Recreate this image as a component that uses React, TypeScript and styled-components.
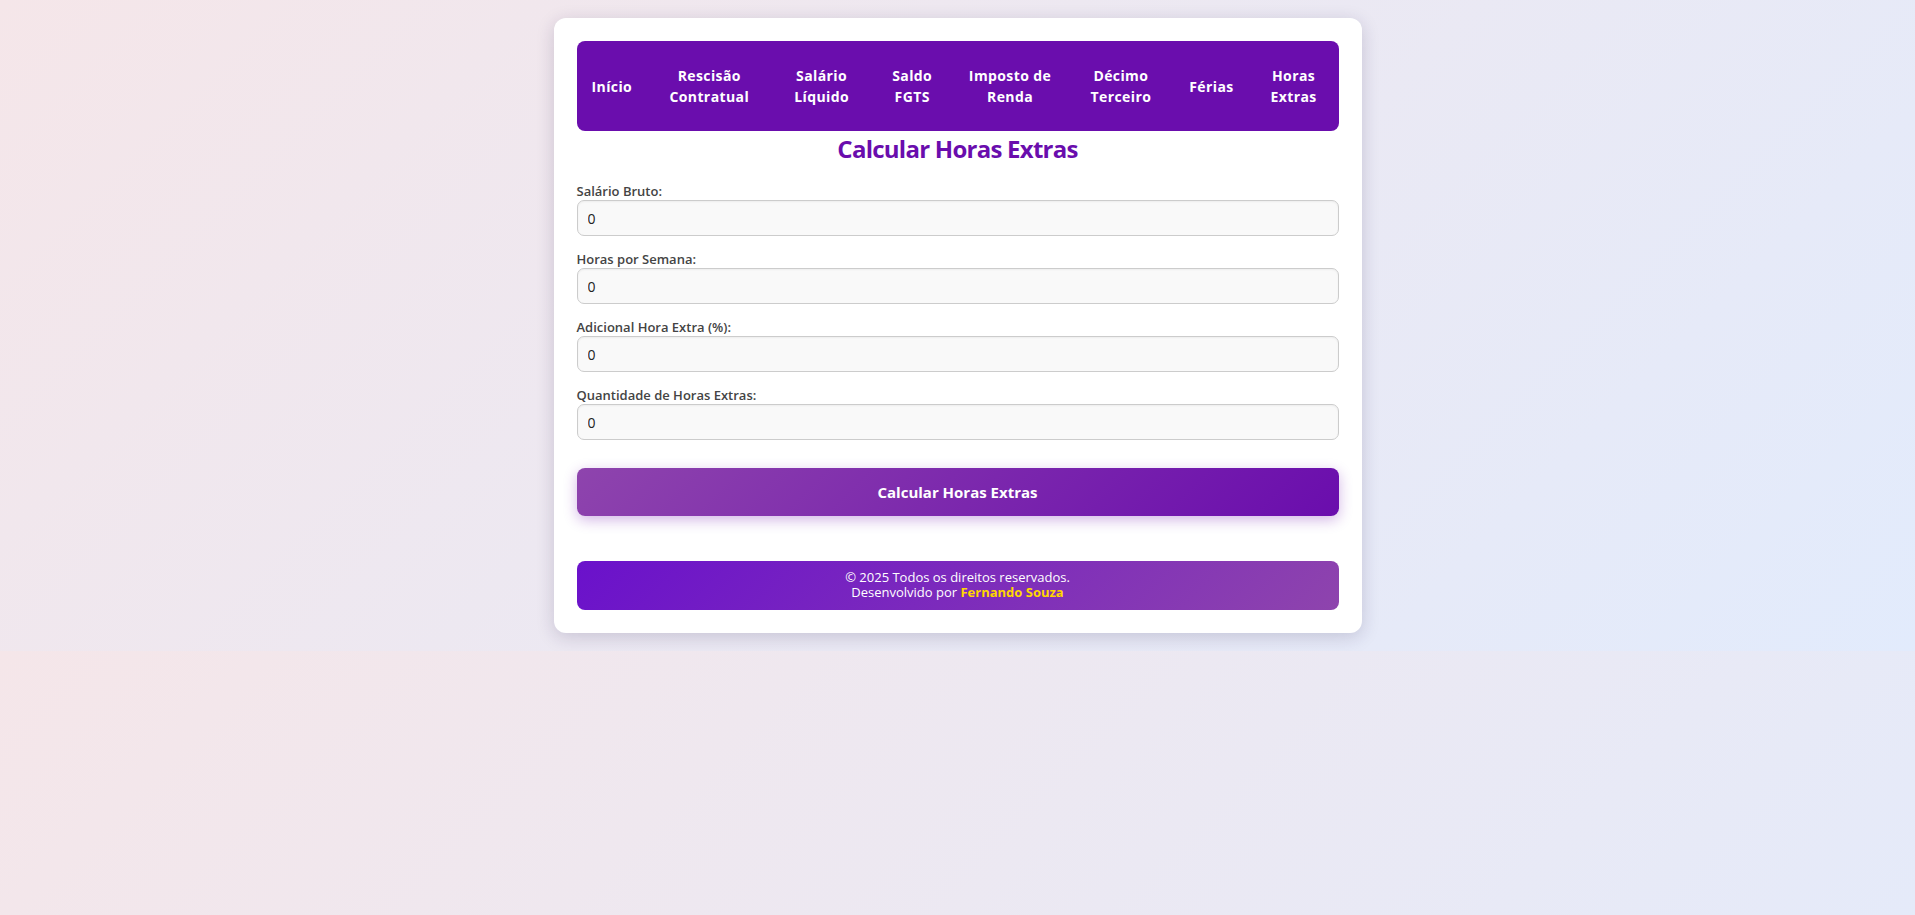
import React from 'react';
import styled, { createGlobalStyle } from 'styled-components';

const Colors = {
  Purple: '#6a0dad',
  PurpleSoft: '#8e44ad',
  PurpleBlue: '#6a11cb',
  Gold: '#ffd700',
  Label: '#444444',
};

const GlobalStyle = createGlobalStyle`
  body {
    margin: 0;
    padding: 18px 0;
    font-family: 'Open Sans', 'DejaVu Sans', sans-serif;
    background: linear-gradient(135deg, #f5e6e9 0%, #e2ebfc 100%);
  }
`;

const Card = styled.div`
  box-sizing: border-box;
  width: 808px;
  margin: 0 auto;
  padding: 23px;
  background: #ffffff;
  border-radius: 12px;
  box-shadow: 0 4px 18px rgba(40, 30, 80, 0.18);
`;

// links are wider than the bar, so they shrink and wrap onto two lines
const Nav = styled.nav`
  display: flex;
  justify-content: space-around;
  align-items: center;
  height: 90px;
  background-color: ${Colors.Purple};
  border-radius: 8px;
`;

const NavLink = styled.a`
  flex: 0 1 auto;
  padding: 0 15px;
  color: #ffffff;
  font-size: 14px;
  font-weight: 700;
  line-height: 21px;
  text-align: center;
  text-decoration: none;
  letter-spacing: 0.4px;
  cursor: pointer;
`;

const Title = styled.h2`
  margin: 0 0 15px;
  color: ${Colors.Purple};
  font-size: 24px;
  font-weight: 700;
  line-height: 36px;
  text-align: center;
  letter-spacing: -0.75px;
`;

const Form = styled.form`
  display: flex;
  flex-direction: column;
  gap: 14px;
`;

const Field = styled.div`
  display: flex;
  flex-direction: column;
`;

const Label = styled.label`
  color: ${Colors.Label};
  font-size: 13px;
  font-weight: 600;
  line-height: 18px;
`;

const Input = styled.input`
  box-sizing: border-box;
  width: 100%;
  height: 36px;
  padding: 0 10px;
  border: 1px solid #cccccc;
  border-radius: 7px;
  background: #f9f9f9;
  color: #222222;
  font-family: inherit;
  font-size: 14px;
  box-shadow: inset 0 1px 2px rgba(0, 0, 0, 0.05);
  outline: none;
`;

const SubmitButton = styled.button`
  height: 48px;
  margin-top: 14px;
  border: none;
  border-radius: 8px;
  background: linear-gradient(135deg, ${Colors.PurpleSoft}, ${Colors.Purple});
  box-shadow: 0 4px 14px rgba(106, 13, 173, 0.3);
  color: #ffffff;
  font-family: inherit;
  font-size: 15px;
  font-weight: 700;
  cursor: pointer;
`;

const Footer = styled.footer`
  margin-top: 45px;
  padding: 9px 0 10px;
  border-radius: 8px;
  background: linear-gradient(135deg, ${Colors.PurpleBlue}, ${Colors.PurpleSoft});
  color: #ffffff;
  font-size: 13px;
  line-height: 15px;
  text-align: center;
`;

const FooterLine = styled.p`
  margin: 0;
`;

const Author = styled.span`
  color: ${Colors.Gold};
  font-weight: 700;
`;

const links = [
  'Início',
  'Rescisão Contratual',
  'Salário Líquido',
  'Saldo FGTS',
  'Imposto\u00a0de Renda',
  'Décimo Terceiro',
  'Férias',
  'Horas Extras',
];

const fields = [
  'Salário Bruto:',
  'Horas por Semana:',
  'Adicional Hora Extra (%):',
  'Quantidade de Horas Extras:',
];

const App: React.FC = () => (
  <>
    <GlobalStyle />
    <Card>
      <Nav>
        {links.map((link) => (
          <NavLink key={link}>{link}</NavLink>
        ))}
      </Nav>
      <Title>Calcular Horas Extras</Title>
      <Form onSubmit={(e) => e.preventDefault()}>
        {fields.map((label) => (
          <Field key={label}>
            <Label>{label}</Label>
            <Input type="number" defaultValue={0} />
          </Field>
        ))}
        <SubmitButton type="submit">Calcular Horas Extras</SubmitButton>
      </Form>
      <Footer>
        <FooterLine>© 2025 Todos os direitos reservados.</FooterLine>
        <FooterLine>
          Desenvolvido por <Author>Fernando Souza</Author>
        </FooterLine>
      </Footer>
    </Card>
  </>
);

export default App;
